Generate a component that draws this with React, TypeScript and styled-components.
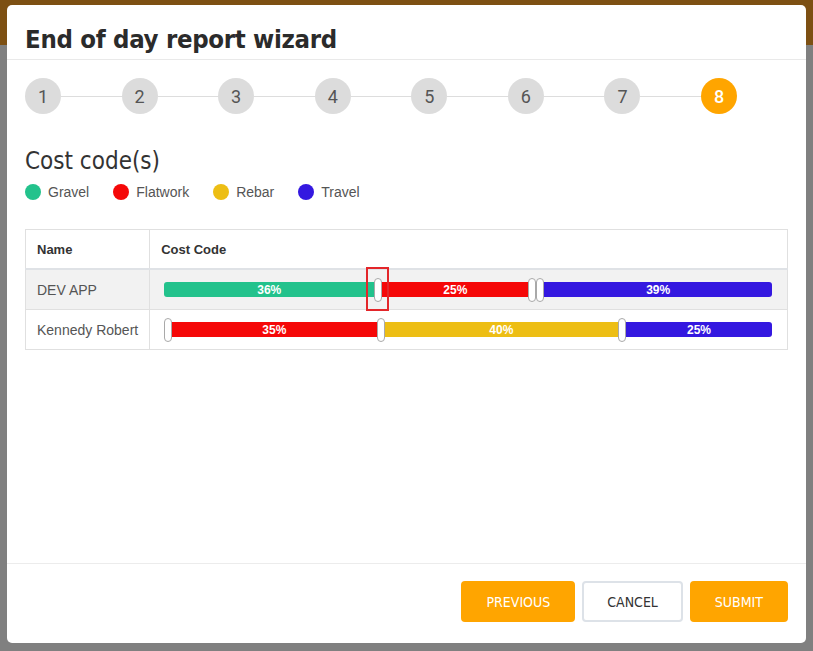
import styled, { createGlobalStyle } from 'styled-components';

const GlobalStyle = createGlobalStyle`
	body {
		margin: 0;
		font-family: 'Liberation Sans', Arial, sans-serif;
	}
`;

const Page = styled.div`
	position: relative;
	width: 813px;
	height: 651px;
	overflow: hidden;
	display: flex;
	flex-direction: column;
	background-color: #808080;
`;

const TopBar = styled.div`
	height: 45px;
	background-color: #7d5013;
`;

const Modal = styled.div`
	position: absolute;
	left: 7px;
	top: 5px;
	width: 799px;
	height: 638px;
	display: flex;
	flex-direction: column;
	background-color: #fff;
	border-radius: 5px;
`;

const Header = styled.div`
	height: 55px;
	box-sizing: border-box;
	padding: 14px 18px 0;
	display: flex;
	align-items: center;
	border-bottom: 1px solid #e9e9e9;
`;

const Title = styled.h1`
	margin: 0;
	font-family: 'DejaVu Sans Condensed', 'DejaVu Sans', sans-serif;
	font-size: 25.5px;
	font-weight: 700;
	color: #2b2b2b;
	letter-spacing: -0.3px;
`;

const Body = styled.div`
	flex: 1;
	padding: 18px 18px 0;
`;

const Stepper = styled.div`
	width: 712px;
	display: flex;
	align-items: center;
`;

const Step = styled.div<{ $active?: boolean }>`
	width: 36px;
	height: 36px;
	flex: none;
	border-radius: 50%;
	display: flex;
	align-items: center;
	justify-content: center;
	font-family: Roboto, sans-serif;
	font-size: 18px;
	color: ${(p) => (p.$active ? '#fff' : '#555')};
	font-weight: ${(p) => (p.$active ? 500 : 400)};
	background-color: ${(p) => (p.$active ? '#ffa500' : '#dcdcdc')};
`;

const Connector = styled.div`
	flex: 1;
	height: 1px;
	background-color: #dddddd;
`;

const SectionTitle = styled.h2`
	margin: 33px 0 0;
	font-family: 'DejaVu Sans Condensed', 'DejaVu Sans', sans-serif;
	font-size: 24px;
	font-weight: 300;
	line-height: 28px;
	color: #333;
`;

const Legend = styled.div`
	margin-top: 9px;
	display: flex;
	align-items: center;
	gap: 24px;
`;

const LegendItem = styled.div`
	display: flex;
	align-items: center;
	gap: 7px;
	font-size: 14px;
	color: #555;
`;

const Dot = styled.span<{ $color: string }>`
	width: 16px;
	height: 16px;
	border-radius: 50%;
	background-color: ${(p) => p.$color};
`;

const Table = styled.table`
	margin-top: 29px;
	width: 763px;
	border-collapse: collapse;
	border: 1px solid #e0e0e0;
`;

const Th = styled.th`
	height: 38px;
	padding: 0 11px;
	text-align: left;
	font-size: 13px;
	font-weight: 700;
	color: #333;
	border-right: 1px solid #e0e0e0;
	border-bottom: 2px solid #dfe2e6;
`;

const Row = styled.tr<{ $shaded?: boolean }>`
	background-color: ${(p) => (p.$shaded ? '#f2f2f2' : '#fff')};
`;

const NameCell = styled.td`
	width: 100px;
	height: 39px;
	padding: 0 11px;
	font-size: 14px;
	color: #555;
	border-right: 1px solid #e0e0e0;
	border-bottom: 1px solid #e0e0e0;
	white-space: nowrap;
`;

const BarCell = styled.td`
	padding: 0 15px 0 14px;
	border-bottom: 1px solid #e0e0e0;
`;

const Bar = styled.div`
	display: flex;
	align-items: center;
	height: 24px;
`;

const Segment = styled.div<{ $color: string; $pct: number }>`
	flex: ${(p) => p.$pct} 1 0;
	height: 15px;
	display: flex;
	align-items: center;
	justify-content: center;
	font-size: 12px;
	font-weight: 700;
	color: #fff;
	background-color: ${(p) => p.$color};
	&:first-child {
		border-radius: 3px 0 0 3px;
	}
	&:last-child {
		border-radius: 0 3px 3px 0;
	}
`;

const Handle = styled.div`
	position: relative;
	flex: none;
	width: 8px;
	height: 24px;
	box-sizing: border-box;
	border: 1px solid #a9a9a9;
	border-radius: 4px;
	background-color: #fff;
`;

const Highlight = styled.div`
	position: absolute;
	left: -9px;
	top: -12px;
	width: 23px;
	height: 44px;
	box-sizing: border-box;
	border: 2px solid #e3262a;
`;

const Footer = styled.div`
	height: 80px;
	box-sizing: border-box;
	padding: 0 18px 21px;
	display: flex;
	align-items: flex-end;
	justify-content: flex-end;
	gap: 7px;
	border-top: 1px solid #ececec;
`;

const Button = styled.button<{ $outline?: boolean }>`
	height: 41px;
	padding: 0 23px;
	box-sizing: border-box;
	font-family: 'DejaVu Sans Condensed', 'DejaVu Sans', sans-serif;
	font-size: 14px;
	text-transform: uppercase;
	border-radius: 4px;
	cursor: pointer;
	color: ${(p) => (p.$outline ? '#333' : '#fff')};
	background-color: ${(p) => (p.$outline ? '#fff' : '#ffa500')};
	border: 2px solid ${(p) => (p.$outline ? '#dde2e8' : '#ffa500')};
`;

const COLORS = {
	Gravel: '#23c28c',
	Flatwork: '#f50808',
	Rebar: '#edbe14',
	Travel: '#3418e0',
};

type Code = keyof typeof COLORS;

const ROWS: { name: string; split: Record<Code, number> }[] = [
	{ name: 'DEV APP', split: { Gravel: 36, Flatwork: 25, Rebar: 0, Travel: 39 } },
	{ name: 'Kennedy Robert', split: { Gravel: 0, Flatwork: 35, Rebar: 40, Travel: 25 } },
];

function CostBar({ split, marked }: { split: Record<Code, number>; marked?: boolean }) {
	const codes = Object.keys(COLORS) as Code[];
	const parts: JSX.Element[] = [];
	codes.forEach((code, i) => {
		if (i > 0) {
			parts.push(
				<Handle key={'h' + i}>{marked && i === 1 ? <Highlight /> : null}</Handle>
			);
		}
		if (split[code] > 0) {
			parts.push(
				<Segment key={code} $color={COLORS[code]} $pct={split[code]}>
					{split[code]}%
				</Segment>
			);
		}
	});
	return <Bar>{parts}</Bar>;
}

export default function App() {
	return (
		<>
			<GlobalStyle />
			<Page>
				<TopBar />
				<Modal>
					<Header>
						<Title>End of day report wizard</Title>
					</Header>
					<Body>
						<Stepper>
							{[1, 2, 3, 4, 5, 6, 7, 8].map((n) => (
								<>
									<Step key={n} $active={n === 8}>
										{n}
									</Step>
									{n < 8 ? <Connector /> : null}
								</>
							))}
						</Stepper>
						<SectionTitle>Cost code(s)</SectionTitle>
						<Legend>
							{(Object.keys(COLORS) as Code[]).map((c) => (
								<LegendItem key={c}>
									<Dot $color={COLORS[c]} />
									{c}
								</LegendItem>
							))}
						</Legend>
						<Table>
							<thead>
								<tr>
									<Th>Name</Th>
									<Th>Cost Code</Th>
								</tr>
							</thead>
							<tbody>
								{ROWS.map((r, i) => (
									<Row key={r.name} $shaded={i === 0}>
										<NameCell>{r.name}</NameCell>
										<BarCell>
											<CostBar split={r.split} marked={i === 0} />
										</BarCell>
									</Row>
								))}
							</tbody>
						</Table>
					</Body>
					<Footer>
						<Button>Previous</Button>
						<Button $outline>Cancel</Button>
						<Button>Submit</Button>
					</Footer>
				</Modal>
			</Page>
		</>
	);
}
